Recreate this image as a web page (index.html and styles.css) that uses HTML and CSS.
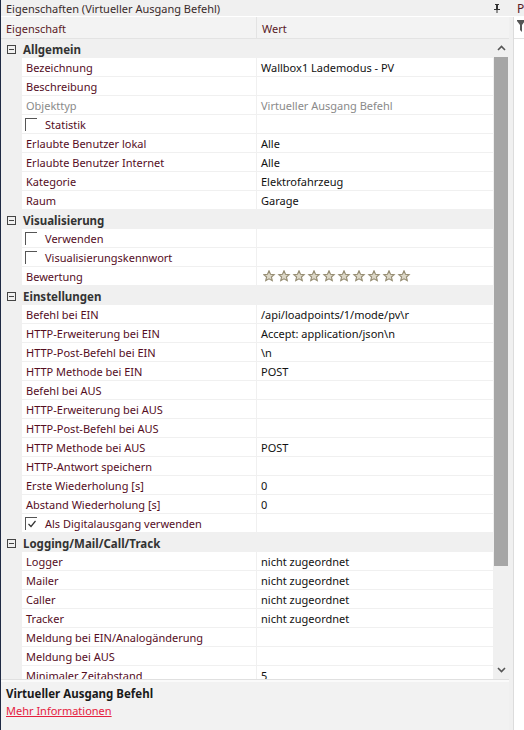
FILE: index.html
```html
<!DOCTYPE html>
<html lang="de">
<head>
<meta charset="utf-8">
<title>Eigenschaften</title>
<link rel="stylesheet" href="styles.css">
</head>
<body>
<div class="app">
  <div class="main">
    <div class="titlebar">
      <span class="title">Eigenschaften (Virtueller Ausgang Befehl)</span>
      <svg class="pin" width="8" height="9" viewBox="0 0 8 9"><path d="M2 0h4v1H5v4h2v1H4.5v3h-1V6H1V5h2V1H2z" fill="#333"/></svg>
    </div>
    <div class="header">
      <div class="hcell name">Eigenschaft</div>
      <div class="hcell val">Wert</div>
    </div>
    <div class="body">
      <div class="rows">
        <div class="cat"><span class="minus"></span><span>Allgemein</span></div>
        <div class="row"><div class="k">Bezeichnung</div><div class="v">Wallbox1 Lademodus - PV</div></div>
        <div class="row"><div class="k">Beschreibung</div><div class="v"></div></div>
        <div class="row dis"><div class="k">Objekttyp</div><div class="v">Virtueller Ausgang Befehl</div></div>
        <div class="row"><div class="k"><span class="cb"></span>Statistik</div><div class="v"></div></div>
        <div class="row"><div class="k">Erlaubte Benutzer lokal</div><div class="v">Alle</div></div>
        <div class="row"><div class="k">Erlaubte Benutzer Internet</div><div class="v">Alle</div></div>
        <div class="row"><div class="k">Kategorie</div><div class="v">Elektrofahrzeug</div></div>
        <div class="row"><div class="k">Raum</div><div class="v">Garage</div></div>
        <div class="cat"><span class="minus"></span><span>Visualisierung</span></div>
        <div class="row"><div class="k"><span class="cb"></span>Verwenden</div><div class="v"></div></div>
        <div class="row"><div class="k"><span class="cb"></span>Visualisierungskennwort</div><div class="v"></div></div>
        <div class="row"><div class="k">Bewertung</div><div class="v stars">
          <svg width="150" height="12" viewBox="0 0 150 12">
            <defs>
              <path id="st" d="M6 0.8l1.5 3.4 3.7.4-2.8 2.4.9 3.7L6 8.8 2.7 10.7l.9-3.7L.8 4.6l3.7-.4z"/>
            </defs>
            <g fill="#ddd8c8" stroke="#958c72" stroke-width="1.1">
              <use href="#st" x="0"/><use href="#st" x="15"/><use href="#st" x="30"/><use href="#st" x="45"/><use href="#st" x="60"/>
              <use href="#st" x="75"/><use href="#st" x="90"/><use href="#st" x="105"/><use href="#st" x="120"/><use href="#st" x="135"/>
            </g>
          </svg>
        </div></div>
        <div class="cat"><span class="minus"></span><span>Einstellungen</span></div>
        <div class="row"><div class="k">Befehl bei EIN</div><div class="v">/api/loadpoints/1/mode/pv\r</div></div>
        <div class="row"><div class="k">HTTP-Erweiterung bei EIN</div><div class="v">Accept: application/json\n</div></div>
        <div class="row"><div class="k">HTTP-Post-Befehl bei EIN</div><div class="v">\n</div></div>
        <div class="row"><div class="k">HTTP Methode bei EIN</div><div class="v">POST</div></div>
        <div class="row"><div class="k">Befehl bei AUS</div><div class="v"></div></div>
        <div class="row"><div class="k">HTTP-Erweiterung bei AUS</div><div class="v"></div></div>
        <div class="row"><div class="k">HTTP-Post-Befehl bei AUS</div><div class="v"></div></div>
        <div class="row"><div class="k">HTTP Methode bei AUS</div><div class="v">POST</div></div>
        <div class="row"><div class="k">HTTP-Antwort speichern</div><div class="v"></div></div>
        <div class="row"><div class="k">Erste Wiederholung [s]</div><div class="v">0</div></div>
        <div class="row"><div class="k">Abstand Wiederholung [s]</div><div class="v">0</div></div>
        <div class="row"><div class="k"><span class="cb checked"><svg width="10" height="10" viewBox="0 0 10 10"><path d="M1.5 5l2.5 2.5L8.5 2" fill="none" stroke="#333" stroke-width="1.2"/></svg></span>Als Digitalausgang verwenden</div><div class="v"></div></div>
        <div class="cat"><span class="minus"></span><span>Logging/Mail/Call/Track</span></div>
        <div class="row"><div class="k">Logger</div><div class="v">nicht zugeordnet</div></div>
        <div class="row"><div class="k">Mailer</div><div class="v">nicht zugeordnet</div></div>
        <div class="row"><div class="k">Caller</div><div class="v">nicht zugeordnet</div></div>
        <div class="row"><div class="k">Tracker</div><div class="v">nicht zugeordnet</div></div>
        <div class="row"><div class="k">Meldung bei EIN/Analogänderung</div><div class="v"></div></div>
        <div class="row"><div class="k">Meldung bei AUS</div><div class="v"></div></div>
        <div class="row"><div class="k">Minimaler Zeitabstand</div><div class="v">5</div></div>
      </div>
      <div class="vscroll">
        <div class="arrow up"><svg width="9" height="6" viewBox="0 0 9 6"><path d="M1 5l3.5-3.5L8 5" fill="none" stroke="#555" stroke-width="1.6"/></svg></div>
        <div class="track"><div class="thumb"></div></div>
        <div class="arrow down"><svg width="9" height="6" viewBox="0 0 9 6"><path d="M1 1l3.5 3.5L8 1" fill="none" stroke="#555" stroke-width="1.6"/></svg></div>
      </div>
    </div>
    <div class="info">
      <div class="info-title">Virtueller Ausgang Befehl</div>
      <a class="info-link" href="#">Mehr Informationen</a>
    </div>
  </div>
  <div class="side">
    <div class="side-title">P</div>
    <div class="side-body">
      <div class="side-head"><svg width="8" height="12" viewBox="0 0 8 12"><path d="M0 0h8v1L5 5v7L3 10V5L0 1z" fill="#555"/></svg></div>
    </div>
  </div>
</div>
</body>
</html>
```
FILE: styles.css
```css
* { box-sizing: border-box; }
html, body { margin: 0; padding: 0; }
body {
  width: 524px;
  height: 730px;
  overflow: hidden;
  background: #fff;
  font-family: "Noto Sans", "Open Sans", sans-serif;
  font-size: 11px;
  color: #1a1a1a;
}
.app { display: flex; height: 730px; background: #f0f0f0; }
.main {
  width: 509px;
  display: flex;
  flex-direction: column;
  background: #f0f0f0;
  border-left: 1px solid #1f2a44;
}
.titlebar {
  height: 17px;
  display: flex;
  align-items: center;
  justify-content: space-between;
  padding: 0 8px 0 5px;
  background: #f0f0f0;
  border-bottom: 1px solid #fff;
}
.title { color: #3a2a2a; line-height: 16px; padding-top: 1px; }
.pin { margin-top: 1px; }
.header {
  height: 22px;
  display: flex;
  background: #f3f3f3;
  border-bottom: 1px solid #e3e3e3;
}
.hcell { line-height: 21px; color: #5a1a26; padding-left: 5px; padding-top: 1px; }
.hcell.name { width: 256px; border-right: 1px solid #e3e3e3; }
.hcell.val { flex: 1; }
.body { display: flex; height: 640px; }
.rows { width: 492px; overflow: hidden; background: #f0f0f0; }
.cat {
  height: 19px;
  display: flex;
  align-items: center;
  background: #f0f0f0;
  font-weight: bold;
  color: #333;
  font-size: 11.5px;
  padding-top: 1px;
}
.minus {
  width: 9px;
  height: 9px;
  margin: 0 7px 0 6px;
  border: 1px solid #444;
  position: relative;
}
.minus::after {
  content: "";
  position: absolute;
  left: 1px;
  right: 1px;
  top: 3px;
  height: 1px;
  background: #444;
}
.row {
  height: 19px;
  margin-left: 21px;
  display: flex;
  background: #fff;
  border-bottom: 1px solid #f0f0f0;
}
.k {
  width: 235px;
  padding-left: 4px;
  padding-top: 2px;
  line-height: 16px;
  color: #550d1e;
  border-right: 1px solid #f0f0f0;
  display: flex;
  align-items: center;
  white-space: nowrap;
}
.v {
  flex: 1;
  padding-left: 4px;
  padding-top: 2px;
  line-height: 16px;
  color: #111;
  white-space: nowrap;
}
.row.dis .k, .row.dis .v { color: #8a8a8a; }
.stars { display: flex; align-items: center; padding-left: 6px; padding-top: 0; }
.cb {
  width: 12px;
  height: 13px;
  margin: -2px 8px 0 -1px;
  border-top: 1px solid #555;
  border-left: 1px solid #555;
  display: flex;
  align-items: center;
  justify-content: center;
}
.vscroll {
  width: 16px;
  display: flex;
  flex-direction: column;
  background: #f0f0f0;
}
.arrow { height: 18px; display: flex; align-items: center; justify-content: center; }
.track { flex: 1; padding: 0 1px; }
.thumb { height: 509px; background: #a6a6a6; }
.info {
  flex: 1;
  background: #f2f2f2;
  border-top: 1px solid #e0e0e0;
  box-shadow: inset 0 2px 0 #fafafa;
  padding: 5px 5px 0 5px;
}
.info-title { font-weight: bold; color: #1a1a1a; line-height: 17px; font-size: 11.5px; }
.info-link { color: #e5213f; line-height: 18px; }
.side {
  flex: 1;
  display: flex;
  flex-direction: column;
  background: #f0f0f0;
}
.side-title { height: 17px; color: #5a1a26; line-height: 16px; padding-left: 8px; padding-top: 1px; border-bottom: 1px solid #fff; font-size: 12px; }
.side-body { flex: 1; margin-left: 4px; background: #fff; border-left: 1px solid #dcdcdc; }
.side-head { height: 22px; padding: 3px 0 0 3px; border-bottom: 1px solid #e3e3e3; }
```
